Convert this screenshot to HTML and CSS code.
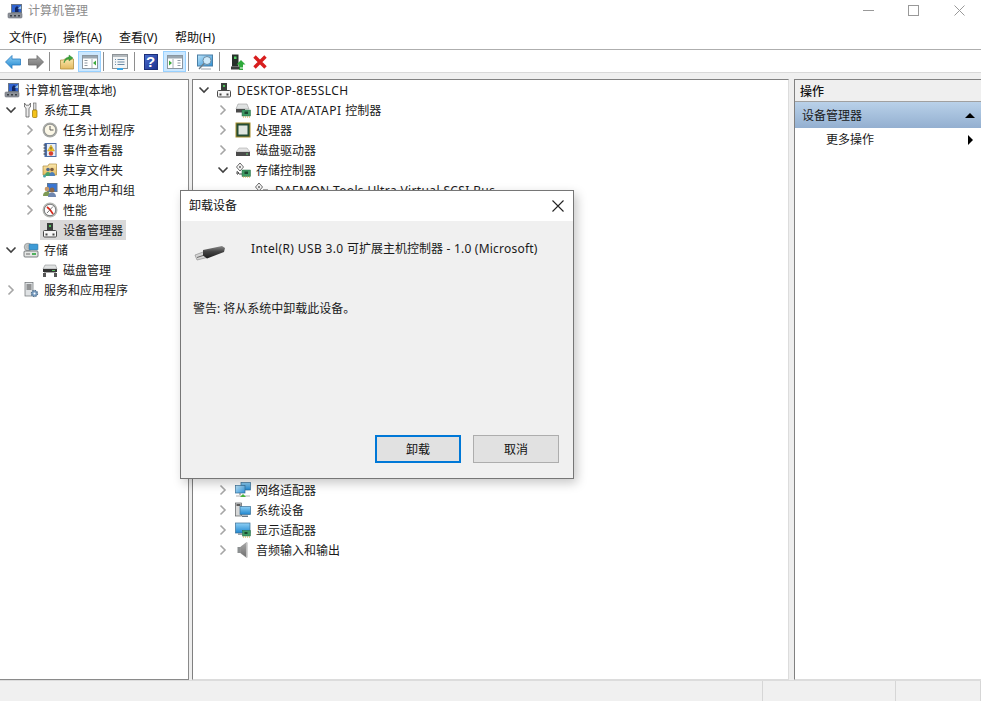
FILE: index.html
```html
<!DOCTYPE html>
<html lang="zh-CN">
<head>
<meta charset="utf-8">
<title>计算机管理</title>
<link rel="stylesheet" href="styles.css">
</head>
<body>
<svg class="defs" xmlns="http://www.w3.org/2000/svg">
  <defs>
    <linearGradient id="gBlue" x1="0" y1="0" x2="0" y2="1"><stop offset="0" stop-color="#8fd0f5"/><stop offset="1" stop-color="#1f86cf"/></linearGradient>
    <linearGradient id="gGray" x1="0" y1="0" x2="0" y2="1"><stop offset="0" stop-color="#a8a8a8"/><stop offset="1" stop-color="#6f6f6f"/></linearGradient>
    <linearGradient id="gFolder" x1="0" y1="0" x2="0" y2="1"><stop offset="0" stop-color="#fbe7ad"/><stop offset="1" stop-color="#e3b95e"/></linearGradient>
    <linearGradient id="gScreen" x1="0" y1="0" x2="1" y2="1"><stop offset="0" stop-color="#bfe6fb"/><stop offset="1" stop-color="#2c8fd6"/></linearGradient>
    <linearGradient id="gUsb" x1="0" y1="0" x2="0" y2="1"><stop offset="0" stop-color="#8a8a8a"/><stop offset=".45" stop-color="#444"/><stop offset="1" stop-color="#1e1e1e"/></linearGradient>
    <linearGradient id="gHelp" x1="0" y1="0" x2="1" y2="1"><stop offset="0" stop-color="#4a6fd0"/><stop offset="1" stop-color="#1b2f8c"/></linearGradient>

    <symbol id="chev-r" viewBox="0 0 16 16"><path d="M5.500 3.500 10 8l-4.500 4.500" fill="none" stroke="#a6a6a6" stroke-width="1.600"/></symbol>
    <symbol id="chev-d" viewBox="0 0 16 16"><path d="M3.500 5.500 8 10l4.500-4.500" fill="none" stroke="#404040" stroke-width="1.600"/></symbol>

    <symbol id="i-mgmt" viewBox="0 0 16 16">
      <rect x="1" y="10" width="14" height="5" rx="1" fill="#8d9299" stroke="#6b7078" stroke-width=".6"/>
      <rect x="3" y="12" width="2" height="1.500" fill="#3a3f46"/><rect x="7" y="12" width="2" height="1.500" fill="#3a3f46"/><rect x="11" y="12" width="2" height="1.500" fill="#3a3f46"/>
      <rect x="4" y="1" width="11" height="9" fill="#6a7686"/><rect x="5" y="2" width="9" height="7" fill="#2f63cf"/>
      <path d="M8 9V5l2-2 1.500 1.500V9z" fill="#13255f"/><path d="M10.500 5.500 14 3v3z" fill="#9ccdf2"/>
    </symbol>
    <symbol id="i-tools" viewBox="0 0 16 16">
      <path d="M1.500 1v4l1.500 1.200V15h3V6.200L7.500 5V1L6 3.200H3z" fill="#ececec" stroke="#5f5f5f" stroke-width=".8"/>
      <rect x="10.500" y="1" width="2.500" height="7" fill="#dcdcdc" stroke="#6f6f6f" stroke-width=".7"/>
      <rect x="9.500" y="8" width="4.500" height="7.500" rx="1" fill="#f3c21c" stroke="#9a7200" stroke-width=".7"/>
    </symbol>
    <symbol id="i-clock" viewBox="0 0 16 16">
      <circle cx="8" cy="8" r="7.500" fill="#a8aaa6"/><circle cx="8" cy="8" r="5.700" fill="#fbf7e6" stroke="#6f7275" stroke-width=".6"/>
      <path d="M8 4v4h3.500" fill="none" stroke="#5a5a5a" stroke-width="1"/>
    </symbol>
    <symbol id="i-event" viewBox="0 0 16 16">
      <rect x="2.500" y="1" width="12" height="14" fill="#4c6ea8"/><rect x="5" y="2" width="8.500" height="12" fill="#e8eef6"/>
      <path d="M1.500 3h2M1.500 6h2M1.500 9h2M1.500 12h2" stroke="#333" stroke-width="1"/>
      <path d="M9 3 12.500 9h-7z" fill="#f5c926" stroke="#a87f08" stroke-width=".4"/><circle cx="9" cy="11.500" r="2.200" fill="#d8402e"/>
      <rect x="8.500" y="5" width="1" height="2.500" fill="#553"/>
    </symbol>
    <symbol id="i-share" viewBox="0 0 16 16">
      <path d="M1 4h5l1-2h7.500v11H1z" fill="url(#gFolder)" stroke="#b08d3c" stroke-width=".7"/>
      <circle cx="6" cy="7.500" r="1.800" fill="#54698a"/><circle cx="10" cy="7.500" r="1.800" fill="#7a5a3c"/>
      <path d="M3 14c0-3 1.500-4 3-4s3 1 3 4z" fill="#4aa368"/><path d="M7.500 14c0-3 1-4 2.500-4s3 1 3 4z" fill="#4d7fb8"/>
      <circle cx="2.500" cy="14" r="1.500" fill="#4aa3a8"/>
    </symbol>
    <symbol id="i-users" viewBox="0 0 16 16">
      <rect x="5" y="1" width="10.500" height="9" fill="#5f7895"/><rect x="6" y="2" width="8.500" height="7" fill="#3a76d2"/>
      <circle cx="5" cy="7" r="2.300" fill="#c89868"/><path d="M1 14c0-3 1.500-4.500 4-4.500S8 11 8 14z" fill="#7d9a55"/>
      <circle cx="10" cy="8" r="2.500" fill="#8b6848"/><path d="M6 15c0-3 1.500-4.500 4-4.500s4 1.500 4 4.500z" fill="#6f87b0"/>
    </symbol>
    <symbol id="i-perf" viewBox="0 0 16 16">
      <circle cx="8" cy="8" r="7.500" fill="#b5b7b3"/><circle cx="8" cy="8" r="5.700" fill="#fff" stroke="#55585b" stroke-width=".7"/>
      <path d="M5 5l3 2.500L11 12" fill="none" stroke="#d5281b" stroke-width="1.700"/><path d="M11 4.500 5 11" stroke="#555" stroke-width=".8"/>
    </symbol>
    <symbol id="i-device" viewBox="0 0 16 16">
      <rect x="5" y="1" width="6" height="8" fill="#3a3f3c"/><rect x="7" y="3" width="2" height="2" fill="#4fc25a"/>
      <rect x="1.500" y="8.500" width="13" height="6.500" rx="1" fill="#f6f6f6" stroke="#4a4a4a" stroke-width="1"/>
      <rect x="3.500" y="11.500" width="2" height="2" fill="#444"/><rect x="10.500" y="11.500" width="2" height="2" fill="#444"/>
    </symbol>
    <symbol id="i-storage" viewBox="0 0 16 16">
      <circle cx="5" cy="5" r="3.800" fill="#c4c7c6" stroke="#7b7e80" stroke-width=".6"/><circle cx="5" cy="5" r="1" fill="#fff" stroke="#666" stroke-width=".4"/>
      <rect x="6" y="2" width="9" height="6" rx=".7" fill="#3d9bd6" stroke="#3b6d8e" stroke-width=".5"/>
      <rect x="1" y="9" width="14" height="6" rx="1" fill="#e4e6e4" stroke="#5e6366" stroke-width=".8"/>
      <rect x="9" y="11" width="4" height="2" fill="#4fb05d"/><rect x="3" y="11.500" width="4" height="1" fill="#6a6a6a"/>
    </symbol>
    <symbol id="i-diskm" viewBox="0 0 16 16">
      <path d="M3 3h10.500L15 7H1z" fill="#dfe1e1" stroke="#7b7e80" stroke-width=".5"/>
      <rect x="1" y="7" width="14" height="3" fill="#333"/><rect x="10" y="8" width="3" height="1" fill="#52c05a"/>
      <rect x="2" y="10" width="12" height="1" fill="#aaa"/><rect x="1" y="11" width="3" height="4" fill="#555"/><rect x="12" y="11" width="3" height="4" fill="#555"/>
    </symbol>
    <symbol id="i-services" viewBox="0 0 16 16">
      <rect x="2" y="0.500" width="8" height="13.500" fill="#dfe2e4" stroke="#6c7073" stroke-width=".7"/>
      <path d="M3.500 3h5M3.500 5h5M3.500 7h5" stroke="#444" stroke-width="1"/>
      <circle cx="11.500" cy="11.500" r="3" fill="#7ea2c6" stroke="#53708d" stroke-width="1.400" stroke-dasharray="1.500 .8"/><circle cx="11.500" cy="11.500" r="1" fill="#fff"/>
    </symbol>
    <symbol id="i-ide" viewBox="0 0 16 16">
      <path d="M3 2h9l2 5H1z" fill="#dfe2e2" stroke="#8a8a8a" stroke-width=".5"/>
      <rect x="1" y="7" width="9" height="3.500" fill="#4a4a4a"/><rect x="7" y="8" width="8.500" height="6" fill="#3f9b63" stroke="#2b6e47" stroke-width=".5"/>
      <rect x="9.500" y="9.500" width="3.500" height="2.500" fill="#1c4730"/><path d="M8 15h7" stroke="#c9a33c" stroke-width="1" stroke-dasharray="1 1"/>
    </symbol>
    <symbol id="i-cpu" viewBox="0 0 16 16">
      <rect x=".5" y=".5" width="15" height="15" fill="#a88f2e"/><rect x="1.500" y="1.500" width="13" height="13" fill="#254d35"/><rect x="3.500" y="3.500" width="9" height="9" fill="#dfe5df"/>
    </symbol>
    <symbol id="i-disk" viewBox="0 0 16 16">
      <path d="M4 6h8l3 4H1z" fill="#e3e3e3" stroke="#999" stroke-width=".5"/><rect x="1" y="10" width="14" height="4" fill="#4b4b4b"/><rect x="11" y="11.500" width="2" height="1" fill="#6fd37a"/>
    </symbol>
    <symbol id="i-stor" viewBox="0 0 16 16">
      <path d="M5 1 1.500 5 5 9l3.500-4z" fill="#fff" stroke="#555" stroke-width=".9"/><circle cx="5" cy="5" r="1.200" fill="#888"/>
      <path d="M2 12V9.500l2 1.500-2 1.500M4 12h3" fill="none" stroke="#444" stroke-width="1"/>
      <rect x="7" y="8" width="8.500" height="6.500" fill="#3f9b63" stroke="#2b6e47" stroke-width=".5"/><rect x="9.500" y="9.500" width="3.500" height="2.500" fill="#1c4730"/>
      <path d="M8 15h7" stroke="#c9a33c" stroke-width="1" stroke-dasharray="1 1"/>
    </symbol>
    <symbol id="i-scsi" viewBox="0 0 16 16">
      <path d="M5 1 1.500 5 5 9l3.500-4z" fill="#fff" stroke="#555" stroke-width=".9"/><circle cx="5" cy="5" r="1.200" fill="#888"/>
      <path d="M9 8h5" stroke="#555" stroke-width="1"/>
    </symbol>
    <symbol id="i-net" viewBox="0 0 16 16">
      <rect x="6" y="0.500" width="9.500" height="7.500" fill="url(#gBlue)" stroke="#3a6f96" stroke-width=".7"/>
      <rect x="0.500" y="3.500" width="9.500" height="7.500" fill="url(#gScreen)" stroke="#3a6f96" stroke-width=".7"/>
      <path d="M5 11v2" stroke="#777"/><rect x="1" y="13" width="14" height="2" fill="#d6d6d6"/><path d="M5 15h6l-3-3z" fill="#49b33d"/>
    </symbol>
    <symbol id="i-sys" viewBox="0 0 16 16">
      <rect x="0.500" y="1" width="6" height="13" fill="#d7d8d8" stroke="#5b5f61" stroke-width=".7"/><path d="M1.500 3h4" stroke="#333" stroke-width="1.500"/>
      <rect x="5" y="4.500" width="10.500" height="8" fill="url(#gBlue)" stroke="#3a6f96" stroke-width=".7"/><rect x="7" y="13.500" width="6" height="1.500" fill="#6a7a88"/>
    </symbol>
    <symbol id="i-disp" viewBox="0 0 16 16">
      <rect x="0.500" y="1" width="14.500" height="10" fill="url(#gBlue)" stroke="#3a6f96" stroke-width=".7"/>
      <rect x="3" y="11" width="6" height="2" fill="#9aa6ae"/>
      <rect x="7.500" y="8.500" width="8" height="5.500" fill="#3f9b63" stroke="#2b6e47" stroke-width=".5"/><rect x="9.500" y="10" width="3" height="2" fill="#1c4730"/>
      <path d="M8 15h7" stroke="#c9a33c" stroke-width="1" stroke-dasharray="1 1"/>
    </symbol>
    <symbol id="i-audio" viewBox="0 0 16 16">
      <rect x="2.500" y="5" width="3" height="6" fill="#8b8f90"/><path d="M5.500 5l6-4.500v15l-6-4.500z" fill="url(#gGray)" stroke="#777" stroke-width=".4"/><path d="M12 .5v15" stroke="#c8c8c8" stroke-width="1.500"/>
    </symbol>

    <symbol id="t-back" viewBox="0 0 16 16"><path d="M.5 8 7 1.500v3.500h8.500v6H7v3.500z" fill="url(#gBlue)" stroke="#2a7cc0" stroke-width=".8"/></symbol>
    <symbol id="t-fwd" viewBox="0 0 16 16"><path d="M15.500 8 9 1.500v3.500H.5v6H9v3.500z" fill="url(#gGray)" stroke="#6a6a6a" stroke-width=".8"/></symbol>
    <symbol id="t-folder" viewBox="0 0 16 16">
      <path d="M1.500 6h3l1-1h9v10h-13z" fill="url(#gFolder)" stroke="#b38f3d" stroke-width=".8"/>
      <path d="M5 9c0-4 3-6 5-6V1l4 3-4 3V5C8 5 6 6.500 5 9z" fill="#3da53d" stroke="#2b7f2b" stroke-width=".4"/>
    </symbol>
    <symbol id="t-panel1" viewBox="0 0 16 16">
      <rect x=".5" y="1.500" width="15" height="13" fill="#fff" stroke="#8a96a0"/><rect x="1" y="2" width="14" height="2.500" fill="#9aa6af"/>
      <path d="M10 5v9" stroke="#a7b2ba"/><path d="M2.500 6.500h3M2.500 9h3M2.500 11.500h3" stroke="#8f9aa3" stroke-width="1.200"/>
      <path d="M14 6.500v5l-3-2.500z" fill="#3caa3c"/>
    </symbol>
    <symbol id="t-panel2" viewBox="0 0 16 16">
      <rect x=".5" y="1.500" width="15" height="13" fill="#fff" stroke="#8a96a0"/><rect x="1" y="2" width="14" height="2.500" fill="#9aa6af"/>
      <path d="M6 5v9" stroke="#a7b2ba"/><path d="M10.500 6.500h3M10.500 9h3M10.500 11.500h3" stroke="#8f9aa3" stroke-width="1.200"/>
      <path d="M2 6.500v5l3-2.500z" fill="#3caa3c"/>
    </symbol>
    <symbol id="t-props" viewBox="0 0 16 16">
      <rect x=".5" y=".5" width="15" height="14" fill="#f4f6f7" stroke="#8d9397"/><rect x="1" y="1" width="14" height="2" fill="#b3b9bd"/>
      <path d="M3 5.500h1M5.500 5.500h7M3 8h1M5.500 8h7M3 10.500h1M5.500 10.500h7" stroke="#6b8aa5" stroke-width="1"/>
      <rect x="5" y="14" width="6" height="2" fill="#38a6e8"/>
    </symbol>
    <symbol id="t-help" viewBox="0 0 16 16">
      <rect x="1.500" y=".5" width="13" height="15" fill="url(#gHelp)" stroke="#1c2f78"/>
    </symbol>
    <symbol id="t-mon" viewBox="0 0 16 16">
      <rect x=".5" y="1" width="15" height="11" fill="url(#gScreen)" stroke="#4a7fa5"/>
      <circle cx="10" cy="6.500" r="4" fill="#cfeafa" stroke="#6d8ca3" stroke-width="1"/><path d="M7 9.500 2 15" stroke="#6d7d88" stroke-width="1.400"/>
      <path d="M4 15h10" stroke="#a9b3ba" stroke-width="1.200"/>
    </symbol>
    <symbol id="t-add" viewBox="0 0 16 16">
      <rect x="2" y="0.500" width="6.500" height="12" fill="#26302a"/><rect x="4" y="2.500" width="2.500" height="2.500" fill="#59d268"/>
      <rect x="1" y="12.500" width="9" height="3" fill="#3a3f3c"/>
      <path d="M11 6l4.500 4.500H13V13H9v-2.500H6.500z" fill="#2eaa3a"/><path d="M9 14h4M9 15.500h4" stroke="#2eaa3a" stroke-width="1"/>
    </symbol>
    <symbol id="t-del" viewBox="0 0 16 16"><path d="M2.500 2.500l11 11M13.500 2.500l-11 11" stroke="#d81e1e" stroke-width="3.400"/></symbol>
    <symbol id="usb" viewBox="0 0 32 16">
      <path d="M1 10 10.500 6.500 13 12.500 3 15z" fill="#d4d4d4" stroke="#8f8f8f" stroke-width=".7"/>
      <path d="M3 12.500l7.500-2.500" stroke="#666" stroke-width="1"/>
      <path d="M9 5 28 1l3 2-1 4-17 6.500-4-3z" fill="url(#gUsb)"/>
    </symbol>
  </defs>
</svg>

<div class="app">
  <header class="titlebar">
    <div class="title">
      <svg class="ico"><use href="#i-mgmt"/></svg>
      <span>计算机管理</span>
    </div>
    <div class="winctl">
      <svg class="ctl ctl-min" viewBox="0 0 11 11"><path d="M0 5.500h11" stroke="#999"/></svg>
      <svg class="ctl ctl-max" viewBox="0 0 11 11"><rect x=".5" y=".5" width="10" height="10" fill="none" stroke="#999"/></svg>
      <svg class="ctl" viewBox="0 0 11 11"><path d="M.5.500l10 10M10.500.500l-10 10" stroke="#999"/></svg>
    </div>
  </header>

  <nav class="menubar">
    <span class="menu">文件(F)</span>
    <span class="menu">操作(A)</span>
    <span class="menu">查看(V)</span>
    <span class="menu">帮助(H)</span>
  </nav>

  <div class="toolbar">
    <span class="tool"><svg class="ico"><use href="#t-back"/></svg></span>
    <span class="tool"><svg class="ico"><use href="#t-fwd"/></svg></span>
    <span class="sep sep-a"></span>
    <span class="tool"><svg class="ico"><use href="#t-folder"/></svg></span>
    <span class="tool on"><svg class="ico"><use href="#t-panel1"/></svg></span>
    <span class="sep sep-b"></span>
    <span class="tool"><svg class="ico"><use href="#t-props"/></svg></span>
    <span class="sep sep-c"></span>
    <span class="tool help"><svg class="ico"><use href="#t-help"/></svg><b class="qm">?</b></span>
    <span class="tool on tool-gap"><svg class="ico"><use href="#t-panel2"/></svg></span>
    <span class="sep sep-b"></span>
    <span class="tool"><svg class="ico"><use href="#t-mon"/></svg></span>
    <span class="sep sep-d"></span>
    <span class="tool"><svg class="ico"><use href="#t-add"/></svg></span>
    <span class="tool tool-narrow"><svg class="ico"><use href="#t-del"/></svg></span>
  </div>
  <div class="band"></div>

  <main class="panes">
    <section class="pane pane-left">
      <div class="row lv-root"><span class="node"><svg class="ico"><use href="#i-mgmt"/></svg><span>计算机管理(本地)</span></span></div>
      <div class="row lv0"><svg class="chev"><use href="#chev-d"/></svg><span class="node"><svg class="ico"><use href="#i-tools"/></svg><span>系统工具</span></span></div>
      <div class="row lv1"><svg class="chev"><use href="#chev-r"/></svg><span class="node"><svg class="ico"><use href="#i-clock"/></svg><span>任务计划程序</span></span></div>
      <div class="row lv1"><svg class="chev"><use href="#chev-r"/></svg><span class="node"><svg class="ico"><use href="#i-event"/></svg><span>事件查看器</span></span></div>
      <div class="row lv1"><svg class="chev"><use href="#chev-r"/></svg><span class="node"><svg class="ico"><use href="#i-share"/></svg><span>共享文件夹</span></span></div>
      <div class="row lv1"><svg class="chev"><use href="#chev-r"/></svg><span class="node"><svg class="ico"><use href="#i-users"/></svg><span>本地用户和组</span></span></div>
      <div class="row lv1"><svg class="chev"><use href="#chev-r"/></svg><span class="node"><svg class="ico"><use href="#i-perf"/></svg><span>性能</span></span></div>
      <div class="row lv1"><span class="chev"></span><span class="node selected"><svg class="ico"><use href="#i-device"/></svg><span>设备管理器</span></span></div>
      <div class="row lv0"><svg class="chev"><use href="#chev-d"/></svg><span class="node"><svg class="ico"><use href="#i-storage"/></svg><span>存储</span></span></div>
      <div class="row lv1"><span class="chev"></span><span class="node"><svg class="ico"><use href="#i-diskm"/></svg><span>磁盘管理</span></span></div>
      <div class="row lv0"><svg class="chev"><use href="#chev-r"/></svg><span class="node"><svg class="ico"><use href="#i-services"/></svg><span>服务和应用程序</span></span></div>
    </section>

    <section class="pane pane-center">
      <div class="row lv0"><svg class="chev"><use href="#chev-d"/></svg><span class="node"><svg class="ico"><use href="#i-device"/></svg><span class="lat">DESKTOP-8E5SLCH</span></span></div>
      <div class="row lv1"><svg class="chev"><use href="#chev-r"/></svg><span class="node"><svg class="ico"><use href="#i-ide"/></svg><span><span class="lat-wide">IDE ATA/ATAPI </span>控制器</span></span></div>
      <div class="row lv1"><svg class="chev"><use href="#chev-r"/></svg><span class="node"><svg class="ico"><use href="#i-cpu"/></svg><span>处理器</span></span></div>
      <div class="row lv1"><svg class="chev"><use href="#chev-r"/></svg><span class="node"><svg class="ico"><use href="#i-disk"/></svg><span>磁盘驱动器</span></span></div>
      <div class="row lv1"><svg class="chev"><use href="#chev-d"/></svg><span class="node"><svg class="ico"><use href="#i-stor"/></svg><span>存储控制器</span></span></div>
      <div class="row lv2"><span class="chev"></span><span class="node"><svg class="ico"><use href="#i-scsi"/></svg><span class="lat">DAEMON Tools Ultra Virtual SCSI Bus</span></span></div>
      <div class="rows-covered"></div>
      <div class="row lv1"><svg class="chev"><use href="#chev-r"/></svg><span class="node"><svg class="ico"><use href="#i-net"/></svg><span>网络适配器</span></span></div>
      <div class="row lv1"><svg class="chev"><use href="#chev-r"/></svg><span class="node"><svg class="ico"><use href="#i-sys"/></svg><span>系统设备</span></span></div>
      <div class="row lv1"><svg class="chev"><use href="#chev-r"/></svg><span class="node"><svg class="ico"><use href="#i-disp"/></svg><span>显示适配器</span></span></div>
      <div class="row lv1"><svg class="chev"><use href="#chev-r"/></svg><span class="node"><svg class="ico"><use href="#i-audio"/></svg><span>音频输入和输出</span></span></div>
    </section>

    <aside class="pane pane-actions">
      <div class="act-head">操作</div>
      <div class="act-group"><span>设备管理器</span><i class="tri-up"></i></div>
      <div class="act-item"><span>更多操作</span><i class="tri-right"></i></div>
    </aside>
  </main>

  <footer class="statusbar">
    <div class="cell cell-main"></div>
    <div class="cell cell-mid"></div>
    <div class="cell cell-end"></div>
  </footer>

  <div class="dialog">
    <div class="dlg-title">
      <span>卸载设备</span>
      <svg class="dlg-close" viewBox="0 0 12 12"><path d="M.5.500l11 11M11.500.500l-11 11" stroke="#222" stroke-width="1.100"/></svg>
    </div>
    <div class="dlg-body">
      <div class="dlg-device">
        <svg class="usb"><use href="#usb"/></svg>
        <span><span class="lat">Intel(R) USB 3.0 </span>可扩展主机控制器<span class="lat-tail"> - 1.0 (Microsoft)</span></span>
      </div>
      <p class="dlg-warn">警告: 将从系统中卸载此设备。</p>
      <div class="dlg-buttons">
        <button class="btn btn-primary">卸载</button>
        <button class="btn">取消</button>
      </div>
    </div>
  </div>
</div>
</body>
</html>
```

FILE: styles.css
```css
* { box-sizing: border-box; }

html, body { margin: 0; padding: 0; }

body {
  width: 981px;
  height: 701px;
  overflow: hidden;
  background: #fff;
  font: 12px/20px "Noto Sans", "Noto Sans CJK SC", sans-serif;
  color: #1a1a1a;
}

.defs { display: block; width: 0; height: 0; }

.app {
  position: relative;
  display: flex;
  flex-direction: column;
  width: 981px;
  height: 701px;
}

.ico { display: block; width: 16px; height: 16px; flex: none; }

.lat { letter-spacing: .37px; }
.lat-wide { letter-spacing: .5px; }
.lat-tail { letter-spacing: .22px; }

/* Title bar */
.titlebar {
  display: flex;
  justify-content: space-between;
  height: 26px;
  flex: none;
}
.title {
  display: flex;
  align-items: flex-start;
  gap: 5px;
  padding: 3px 0 0 7px;
  color: #8c8c8c;
}
.title span { margin-top: -2px; }
.winctl { display: flex; align-items: flex-start; padding: 5px 16px 0 0; }
.ctl { display: block; width: 11px; height: 11px; }
.ctl-min { margin-right: 34px; }
.ctl-max { margin-right: 35px; }

/* Menu */
.menubar {
  display: flex;
  height: 24px;
  flex: none;
  padding-left: 1px;
  border-bottom: 1px solid #aeaeae;
}
.menu { width: 56px; padding: 2px 0 0 8px; line-height: 20px; color: #111; }
.menu:first-child { width: 54px; }

/* Toolbar */
.toolbar {
  display: flex;
  align-items: stretch;
  height: 22px;
  flex: none;
  padding: 1px 0 0 1px;
}
.tool {
  position: relative;
  display: flex;
  align-items: center;
  justify-content: center;
  width: 23px;
  height: 21px;
}
.tool.on { background: #cce8ff; border: 1px solid #99d1ff; }
.tool-gap { margin-left: 1px; }
.tool-narrow { width: 21px; }
.qm {
  position: absolute;
  inset: 0;
  text-align: center;
  font: bold 15px/21px "Liberation Sans", sans-serif;
  color: #fff;
}
.sep { width: 1px; height: 19px; margin-top: 1px; background: #8e8e8e; }
.sep-a { margin: 1px 5px 0 2px; }
.sep-b { margin: 1px 4px 0 2px; }
.sep-c { margin: 1px 4px 0 3px; }
.sep-d { margin: 1px 6px 0 3px; }

.band {
  height: 7px;
  flex: none;
  background: #f0f0f0;
  border-top: 1px solid #d9d9d9;
}

/* Panes */
.panes {
  display: flex;
  flex: 1;
  min-height: 0;
  background: #eeeeee;
}
.pane {
  background: #fff;
  border-top: 1px solid #828282;
}
.pane-left {
  width: 189px;
  flex: none;
  border-right: 1px solid #8a8a8a;
  border-bottom: 1px solid #8a8a8a;
}
.pane-center {
  width: 597px;
  flex: none;
  margin-left: 3px;
  border-left: 1px solid #808080;
  border-right: 1px solid #dcdcdc;
  border-bottom: 1px solid #dcdcdc;
}
.pane-actions {
  flex: 1;
  margin-left: 5px;
  border-left: 1px solid #808080;
  border-bottom: 1px solid #dcdcdc;
}

/* Tree */
.row { display: flex; align-items: center; height: 20px; white-space: nowrap; }
.lv-root { padding-left: 2px; }
.lv0 { padding-left: 3px; }
.lv1 { padding-left: 22px; }
.lv2 { padding-left: 41px; }
.chev { display: block; width: 16px; height: 16px; flex: none; margin-right: 2px; }
.node {
  display: flex;
  align-items: center;
  gap: 5px;
  height: 20px;
  padding: 0 3px 0 2px;
}
.node > span { padding-top: 2px; }
.node.selected { background: #d9d9d9; }
.rows-covered { height: 280px; }

/* Action pane */
.act-head {
  height: 22px;
  padding: 1px 0 0 5px;
  line-height: 21px;
  background: #efefef;
  border-bottom: 1px solid #a0a0a0;
  color: #111;
  font-weight: 500;
}
.act-group {
  display: flex;
  align-items: center;
  justify-content: space-between;
  height: 26px;
  padding: 0 6px 0 7px;
  background: linear-gradient(#b9d1e9, #93afd0);
}
.act-group span { padding-top: 2px; }
.act-item {
  display: flex;
  align-items: center;
  justify-content: space-between;
  height: 23px;
  padding: 0 8px 0 31px;
}
.tri-up {
  width: 0; height: 0;
  border-left: 5px solid transparent;
  border-right: 5px solid transparent;
  border-bottom: 5px solid #000;
}
.tri-right {
  width: 0; height: 0;
  border-top: 5px solid transparent;
  border-bottom: 5px solid transparent;
  border-left: 5px solid #000;
}

/* Status bar */
.statusbar {
  display: flex;
  height: 21px;
  flex: none;
  background: #f0f0f0;
  border-top: 1px solid #dcdcdc;
}
.cell { border-right: 1px solid #d6d6d6; }
.cell-main { width: 763px; }
.cell-mid { width: 133px; }
.cell-end { flex: 1; }

/* Dialog */
.dialog {
  position: absolute;
  left: 180px;
  top: 190px;
  display: flex;
  flex-direction: column;
  width: 394px;
  height: 289px;
  background: #f0f0f0;
  border: 1px solid #767676;
  box-shadow: 3px 4px 10px rgba(0, 0, 0, .22);
}
.dlg-title {
  display: flex;
  align-items: center;
  justify-content: space-between;
  height: 30px;
  flex: none;
  padding: 0 9px 0 8px;
  background: #fff;
  color: #111;
}
.dlg-close { display: block; width: 12px; height: 12px; }
.dlg-body {
  display: flex;
  flex-direction: column;
  flex: 1;
  padding: 18px 14px 15px 12px;
}
.dlg-device {
  display: flex;
  align-items: flex-start;
  gap: 25px;
  height: 24px;
  padding-left: 1px;
}
.usb { display: block; width: 32px; height: 16px; margin-top: 6px; flex: none; }
.dlg-warn { margin: 36px 0 0; }
.dlg-buttons {
  display: flex;
  justify-content: flex-end;
  gap: 12px;
  margin-top: auto;
}
.btn {
  width: 86px;
  height: 28px;
  padding: 1px 0 0;
  background: #e1e1e1;
  border: 1px solid #adadad;
  font: inherit;
  color: #111;
}
.btn-primary { border: 2px solid #0078d7; }
```
